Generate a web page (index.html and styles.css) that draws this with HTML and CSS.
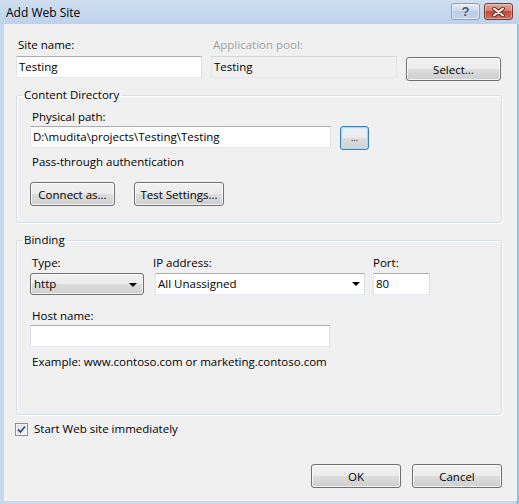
FILE: index.html
```html
<!DOCTYPE html>
<html lang="en">
<head>
	<meta charset="UTF-8">
	<title>Add Web Site</title>
	<link rel="stylesheet" href="styles.css">
</head>
<body>
	<div class="window">
		<div class="titlebar">
			<span class="title">Add Web Site</span>
			<div class="caption">
				<button type="button" class="cap-btn help">?</button>
				<button type="button" class="cap-btn close">
					<svg width="13" height="10" viewBox="0 0 13 10">
						<path d="M2 1.5 L11 8.5 M11 1.5 L2 8.5" stroke="#5a1d17" stroke-width="3.6" stroke-linecap="round"/>
						<path d="M2 1.5 L11 8.5 M11 1.5 L2 8.5" stroke="#fff" stroke-width="2" stroke-linecap="round"/>
					</svg>
				</button>
			</div>
		</div>
		<div class="frame">
			<div class="content">
				<!-- site name / pool -->
				<div class="top-row">
					<label class="lbl">Site name:</label>
					<label class="lbl disabled">Application pool:</label>
					<span></span>
					<div class="textbox site-name">Testing</div>
					<div class="textbox readonly pool">Testing</div>
					<button type="button" class="btn select-btn">Select...</button>
				</div>

				<fieldset class="group">
					<legend>Content Directory</legend>
					<div class="group-body dir-body">
						<label class="lbl">Physical path:</label>
						<div class="path-row">
							<div class="textbox path">D:\mudita\projects\Testing\Testing</div>
							<button type="button" class="btn focused browse">...</button>
						</div>
						<div class="lbl pass">Pass-through authentication</div>
						<div class="btn-row">
							<button type="button" class="btn connect">Connect as...</button>
							<button type="button" class="btn test">Test Settings...</button>
						</div>
					</div>
				</fieldset>

				<fieldset class="group binding">
					<legend>Binding</legend>
					<div class="group-body bind-body">
						<div class="bind-row">
							<div class="col col-type">
								<label class="lbl">Type:</label>
								<div class="combo">http<span class="arrow"></span></div>
							</div>
							<div class="col col-ip">
								<label class="lbl">IP address:</label>
								<div class="textbox combo-edit">All Unassigned<span class="arrow"></span></div>
							</div>
							<div class="col col-port">
								<label class="lbl">Port:</label>
								<div class="textbox port">80</div>
							</div>
						</div>
						<label class="lbl host-lbl">Host name:</label>
						<div class="textbox host"></div>
						<div class="lbl example">Example: www.contoso.com or marketing.contoso.com</div>
					</div>
				</fieldset>

				<div class="check-row">
					<span class="checkbox">
						<svg width="11" height="11" viewBox="0 0 11 11">
							<path d="M2 5.5 L4.5 8 L9 2.5" fill="none" stroke="#3b4f86" stroke-width="1.8"/>
						</svg>
					</span>
					<span>Start Web site immediately</span>
				</div>

				<div class="footer">
					<button type="button" class="btn ok">OK</button>
					<button type="button" class="btn cancel">Cancel</button>
				</div>
			</div>
		</div>
	</div>
</body>
</html>
```

FILE: styles.css
```css
body {
	margin: 0;
	font-family: "Segoe UI", "Open Sans", sans-serif;
	font-size: 11.5px;
	color: #000;
}
.window {
	width: 519px;
	height: 504px;
	display: flex;
	flex-direction: column;
	background: #c6d9ee;
}

/* title bar */
.titlebar {
	height: 24px;
	flex: none;
	display: flex;
	justify-content: space-between;
	align-items: flex-start;
	padding-left: 6px;
	background: linear-gradient(#d0dff1, #bdd3eb);
}
.title {
	line-height: 25px;
	font-size: 12px;
}
.caption {
	display: flex;
	gap: 4px;
	margin: 3px 6px 0 0;
}
.cap-btn {
	width: 29px;
	height: 17px;
	padding: 0;
	border-radius: 3px;
	display: flex;
	align-items: center;
	justify-content: center;
	font-family: "Liberation Sans", sans-serif;
}
.cap-btn.help {
	border: 1px solid #8da0ba;
	background: linear-gradient(#e3ebf5, #c9d8ea 50%, #b9cce3 50%, #c4d6ec);
	box-shadow: inset 0 0 0 1px rgba(255,255,255,.5);
	color: #41526b;
	font-size: 13px;
	font-weight: bold;
	text-shadow: 0 0 2px #fff;
}
.cap-btn.close {
	width: 29px;
	border: 1px solid #7d3a33;
	background: linear-gradient(#e3a99f, #d27a6c 50%, #c24a3c 50%, #d0705f);
	box-shadow: inset 0 0 0 1px rgba(255,255,255,.35);
}

/* window frame + client area */
.frame {
	flex: 1;
	display: flex;
	padding: 0 0 3px 4px;
	border-right: 3px solid #8cc3e6;
}
.content {
	flex: 1;
	display: flex;
	flex-direction: column;
	background: #f0f0f0;
	padding: 13px 15px 13px 12px;
}

.lbl {
	display: block;
	line-height: 16px;
	padding-left: 2px;
}
.lbl.disabled {
	color: #a0a0a0;
}

.textbox {
	box-sizing: border-box;
	height: 22px;
	line-height: 20px;
	border: 1px solid;
	border-color: #abadb3 #dbdfe6 #e3e9ef #e2e3ea;
	background: #fff;
	padding: 0 2px;
	white-space: nowrap;
	overflow: hidden;
}
.textbox.readonly {
	background: #f0f0f0;
	border-color: #d5d5d5 #e3e3e3 #e9e9e9 #e3e3e3;
}

.btn {
	box-sizing: border-box;
	height: 24px;
	padding: 0;
	border: 1px solid #707070;
	border-radius: 3px;
	background: linear-gradient(#f2f2f2, #ebebeb 50%, #dddddd 50%, #cfcfcf);
	box-shadow: inset 0 0 0 1px rgba(255,255,255,.75);
	font: inherit;
	color: #000;
	text-align: center;
}
.btn.focused {
	border-color: #3c7fb1;
	box-shadow: inset 0 0 0 1px #a8daf2, inset 0 0 2px 2px rgba(190,230,250,.6);
}

/* first row */
.top-row {
	display: grid;
	grid-template-columns: 186px 186px 95px;
	grid-template-rows: 16px auto;
	column-gap: 9px;
	row-gap: 3px;
	align-items: start;
}
.select-btn {
	margin-top: 1px;
}

/* group boxes */
.group {
	margin: 6px 0 0 0;
	padding: 0;
	width: 486px;
	box-sizing: border-box;
	min-width: 0;
	border: 1px solid #d5dfe5;
	border-radius: 3px;
	box-shadow: inset 1px 1px 0 #fff, 1px 1px 0 #fff;
}
.group legend {
	margin-left: 5px;
	padding: 0 2px;
	line-height: 16px;
}
.group.binding {
	margin-top: 9px;
}
.group-body {
	padding: 6px 14px 16px 13px;
}

.path-row {
	display: flex;
	gap: 9px;
	margin-top: 1px;
	align-items: flex-start;
}
.path {
	width: 301px;
}
.browse {
	width: 29px;
	font-size: 9px;
	line-height: 16px;
}
.pass {
	margin-top: 4px;
}
.btn-row {
	display: flex;
	gap: 19px;
	margin-top: 12px;
}
.connect {
	width: 85px;
}
.test {
	width: 90px;
}

/* binding */
.bind-body {
	padding-top: 7px;
	padding-bottom: 44px;
}
.bind-row {
	display: flex;
}
.col .lbl {
	margin-bottom: 2px;
}
.col-type {
	width: 114px;
}
.col-ip {
	width: 210px;
	margin-left: 11px;
}
.col-ip .lbl {
	margin-left: -2px;
	padding-left: 0;
}
.col-port {
	width: 57px;
	margin-left: 8px;
}
.col-port .lbl {
	padding-left: 0;
}
.combo {
	position: relative;
	box-sizing: border-box;
	height: 22px;
	line-height: 20px;
	padding-left: 3px;
	border: 1px solid #707070;
	border-radius: 3px;
	background: linear-gradient(#f2f2f2, #ebebeb 50%, #dddddd 50%, #cfcfcf);
	box-shadow: inset 0 0 0 1px rgba(255,255,255,.75);
}
.combo-edit {
	position: relative;
}
.arrow {
	position: absolute;
	right: 6px;
	top: 9px;
	border-left: 4px solid transparent;
	border-right: 4px solid transparent;
	border-top: 4px solid #000;
}
.col-ip .arrow {
	right: 4px;
	top: 8px;
}
.host-lbl {
	margin-top: 13px;
}
.host {
	width: 300px;
	margin-top: 1px;
}
.example {
	margin-top: 7px;
}

/* checkbox */
.check-row {
	display: flex;
	align-items: center;
	gap: 6px;
	margin-top: 6px;
	line-height: 16px;
}
.checkbox {
	width: 13px;
	height: 13px;
	box-sizing: border-box;
	border: 1px solid #8e8f8f;
	background: linear-gradient(135deg, #dcdcdc, #fbfbfb);
	box-shadow: inset 0 0 0 1px #f4f4f4;
	display: flex;
	align-items: center;
	justify-content: center;
	margin-left: -1px;
}
.checkbox svg {
	display: block;
}

.footer {
	margin-top: auto;
	display: flex;
	justify-content: flex-end;
	gap: 11px;
}
.ok, .cancel {
	width: 90px;
}
```
